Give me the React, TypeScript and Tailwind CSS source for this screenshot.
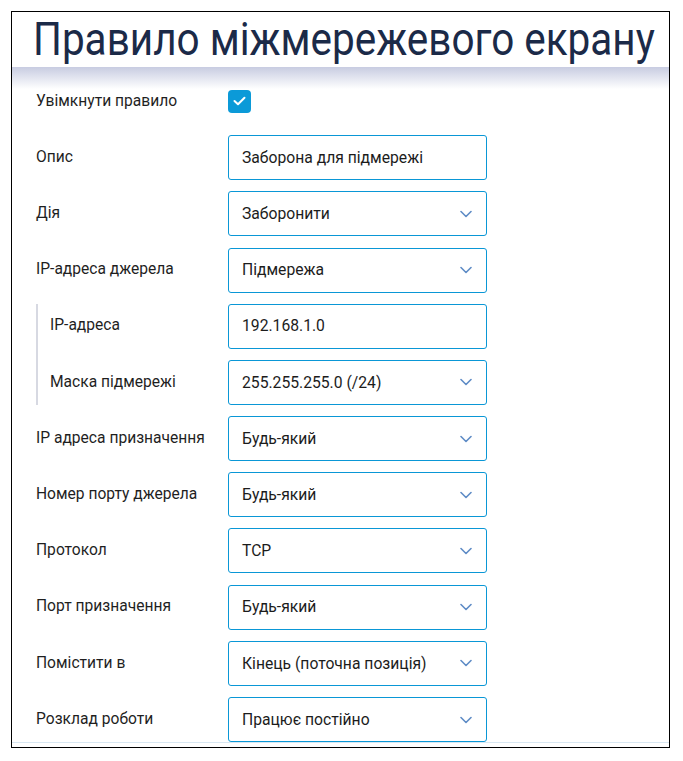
import React from "react";

type Row = {
  label: string;
  value?: string;
  kind: "check" | "input" | "select";
};

const top: Row[] = [
  { label: "Увімкнути правило", kind: "check" },
  { label: "Опис", value: "Заборона для підмережі", kind: "input" },
  { label: "Дія", value: "Заборонити", kind: "select" },
  { label: "IP-адреса джерела", value: "Підмережа", kind: "select" },
];

const nested: Row[] = [
  { label: "IP-адреса", value: "192.168.1.0", kind: "input" },
  { label: "Маска підмережі", value: "255.255.255.0 (/24)", kind: "select" },
];

const bottom: Row[] = [
  { label: "IP адреса призначення", value: "Будь-який", kind: "select" },
  { label: "Номер порту джерела", value: "Будь-який", kind: "select" },
  { label: "Протокол", value: "TCP", kind: "select" },
  { label: "Порт призначення", value: "Будь-який", kind: "select" },
  { label: "Помістити в", value: "Кінець (поточна позиція)", kind: "select" },
  { label: "Розклад роботи", value: "Працює постійно", kind: "select" },
];

function Chevron() {
  return (
    <svg width="12" height="8" viewBox="0 0 12 8" className="shrink-0">
      <path d="M1 1.5 L6 6.5 L11 1.5" fill="none" stroke="#5f8cc6" strokeWidth="1.6" strokeLinecap="round" strokeLinejoin="round" />
    </svg>
  );
}

function Field({ row }: { row: Row }) {
  if (row.kind === "check") {
    return (
      <div className="w-[23px] h-[23px] rounded-[4px] bg-[#0b9ad8] flex items-center justify-center">
        <svg width="13" height="10" viewBox="0 0 13 10">
          <path d="M1.5 5 L5 8.3 L11.5 1.7" fill="none" stroke="#fff" strokeWidth="2" strokeLinecap="round" strokeLinejoin="round" />
        </svg>
      </div>
    );
  }
  return (
    <div className="w-[259px] h-[45px] border border-[#0a97d6] rounded-[3px] flex items-center justify-between pl-[13px] pr-[14px] text-[15.7px] text-[#1c1c1c]">
      <span>{row.value}</span>
      {row.kind === "select" && <Chevron />}
    </div>
  );
}

function FormRow({ row, inner }: { row: Row; inner?: boolean }) {
  return (
    <div className="flex items-center h-[45px]">
      <div className={"text-[15.6px] text-[#1f1f1f] " + (inner ? "w-[190px] pl-[12px]" : "w-[192px]")}>{row.label}</div>
      <Field row={row} />
    </div>
  );
}

export default function App() {
  return (
    <div className="bg-white w-[683px] h-[761px] pt-[11px] pl-[11px]" style={{ fontFamily: "Roboto, 'Liberation Sans', sans-serif" }}>
      <div className="w-[659px] h-[737px] border border-black flex flex-col pb-[4px] overflow-hidden">
        <div className="h-[55px] flex items-center pl-[21px]">
          <h1 className="text-[46px] leading-none text-[#1b2a48] whitespace-nowrap origin-left scale-x-[0.88]">Правило міжмережевого екрану</h1>
        </div>
        <div className="flex-1 pt-[12px] border-b border-[#d8e7f2] bg-[linear-gradient(to_bottom,#c8cce1,#ffffff_22px)]">
          <div className="flex flex-col gap-[11.2px] pl-[24px]">
            {top.map((r, i) => (
              <FormRow key={i} row={r} />
            ))}
            <div className="flex flex-col gap-[11.2px] border-l-2 border-[#d7d9e2]">
              {nested.map((r, i) => (
                <FormRow key={i} row={r} inner />
              ))}
            </div>
            {bottom.map((r, i) => (
              <FormRow key={i} row={r} />
            ))}
          </div>
        </div>
      </div>
    </div>
  );
}
